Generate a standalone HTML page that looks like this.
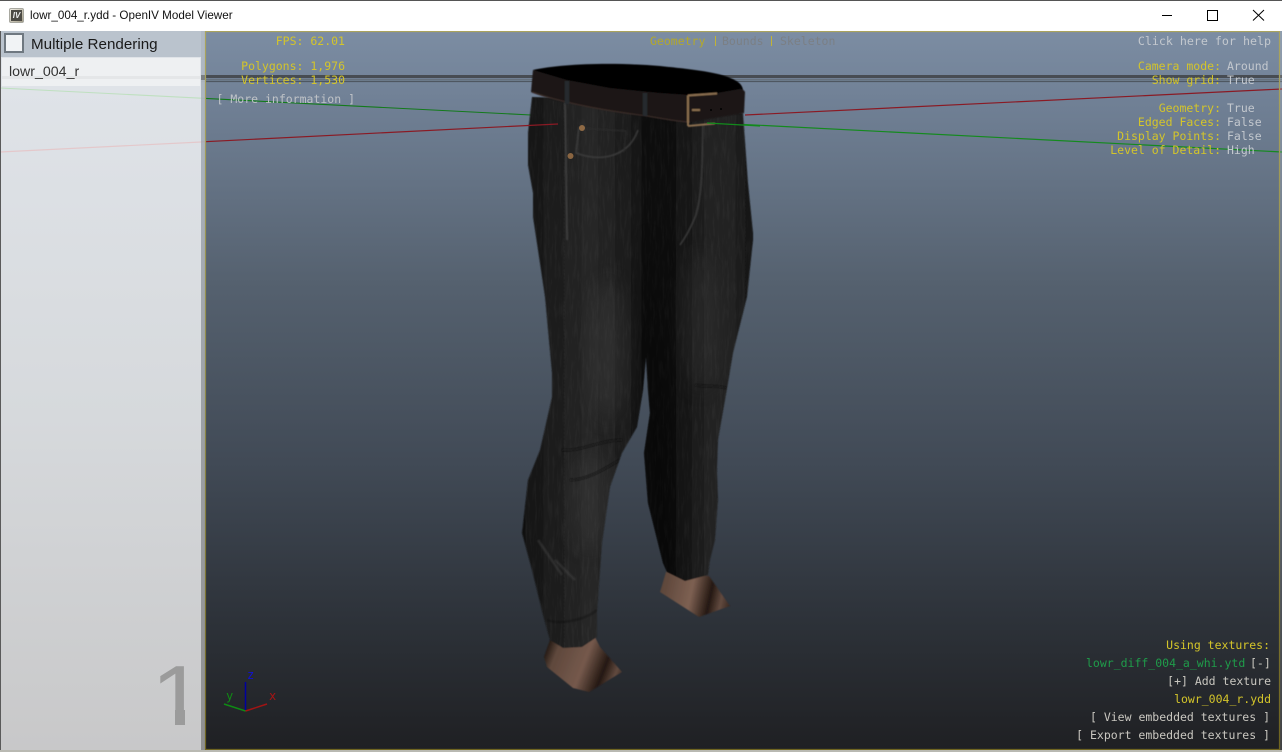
<!DOCTYPE html>
<html><head><meta charset="utf-8"><style>
html,body{margin:0;padding:0;background:#fff}
#w{position:relative;width:1282px;height:752px;overflow:hidden;background:#fff;font-family:"Liberation Sans",sans-serif}
.a{position:absolute}
.t{position:absolute;font:11.5px/14px "DejaVu Sans Mono","Liberation Mono",monospace;white-space:pre;color:#d4c52a}
.r{text-align:right}
.g{color:#c3c8ce}
.l{color:#c9c7c0}
</style></head><body><div id="w">
<div class="a" style="left:0;top:0;width:1282px;height:1px;background:#555"></div>
<div class="a" style="left:9px;top:8px;width:15px;height:15px;border-radius:2px;background:linear-gradient(135deg,#f2efe6,#a59f8b);border:1px solid #a8a8a0;box-sizing:border-box"></div>
<div class="a" style="left:11px;top:10px;width:11px;height:11px;background:#4c4a44;color:#eee;font:bold italic 8px/11px 'Liberation Sans',sans-serif;text-align:center">IV</div>
<div class="a" style="left:30px;top:8px;font-size:11.66px;line-height:16px;color:#111">lowr_004_r.ydd - OpenIV Model Viewer</div>
<svg class="a" style="left:1150px;top:0" width="132" height="30" fill="none" stroke="#000" stroke-width="1"><path d="M12 15.5h10M57.5 10.500h10v10h-10zM103 10l11 10.500M114 10l-11 10.500"/></svg>

<svg class="a" style="left:0;top:31px" width="1282" height="721" viewBox="0 31 1282 721">
<defs>
<linearGradient id="bg" x1="0" y1="31" x2="0" y2="750" gradientUnits="userSpaceOnUse">
<stop offset="0" stop-color="#7c8da3"/><stop offset=".1" stop-color="#708095"/><stop offset=".35" stop-color="#55616f"/><stop offset=".6" stop-color="#414a56"/><stop offset=".82" stop-color="#2d3239"/><stop offset="1" stop-color="#1f2023"/>
</linearGradient>
<linearGradient id="panel" x1="0" y1="86" x2="0" y2="750" gradientUnits="userSpaceOnUse">
<stop offset="0" stop-color="#dfe3e8"/><stop offset=".5" stop-color="#d6d9dc"/><stop offset="1" stop-color="#c8c8c9"/>
</linearGradient>
<linearGradient id="strip" x1="0" y1="31" x2="0" y2="750" gradientUnits="userSpaceOnUse">
<stop offset="0" stop-color="#b4bdc8"/><stop offset=".5" stop-color="#a5a9ae"/><stop offset="1" stop-color="#999"/>
</linearGradient>
<linearGradient id="yb" x1="0" y1="31" x2="0" y2="750" gradientUnits="userSpaceOnUse">
<stop offset="0" stop-color="#aaa45e"/><stop offset=".5" stop-color="#8f8a4a"/><stop offset="1" stop-color="#6f6420"/>
</linearGradient>
<linearGradient id="jL" x1="522" y1="0" x2="646" y2="0" gradientUnits="userSpaceOnUse">
<stop offset="0" stop-color="#101010"/><stop offset=".18" stop-color="#1a1a1a"/><stop offset=".55" stop-color="#272727"/><stop offset=".85" stop-color="#1c1c1c"/><stop offset="1" stop-color="#0e0e0e"/>
</linearGradient>
<linearGradient id="jR" x1="645" y1="0" x2="754" y2="0" gradientUnits="userSpaceOnUse">
<stop offset="0" stop-color="#0b0b0b"/><stop offset=".3" stop-color="#121212"/><stop offset=".6" stop-color="#232323"/><stop offset=".88" stop-color="#1f1f1f"/><stop offset="1" stop-color="#0f0f0f"/>
</linearGradient>
<linearGradient id="f1" x1="545" y1="650" x2="622" y2="680" gradientUnits="userSpaceOnUse">
<stop offset="0" stop-color="#1e1510"/><stop offset=".14" stop-color="#5f483c"/><stop offset=".5" stop-color="#75594c"/><stop offset=".75" stop-color="#241812"/><stop offset=".9" stop-color="#624a3f"/><stop offset="1" stop-color="#3a2a22"/>
</linearGradient>
<linearGradient id="f2" x1="660" y1="585" x2="730" y2="600" gradientUnits="userSpaceOnUse">
<stop offset="0" stop-color="#5a4438"/><stop offset=".45" stop-color="#7d6052"/><stop offset=".72" stop-color="#241812"/><stop offset=".88" stop-color="#624a3f"/><stop offset="1" stop-color="#3d2c24"/>
</linearGradient>
<filter id="n" x="0" y="0" width="100%" height="100%" color-interpolation-filters="sRGB"><feTurbulence type="fractalNoise" baseFrequency=".4 .05" numOctaves="3" seed="4"/><feColorMatrix values="0 0 0 0 1 0 0 0 0 1 0 0 0 0 1 1.5 0 0 0 -.62"/></filter>
<filter id="b1" x="-5%" y="-5%" width="110%" height="110%"><feGaussianBlur stdDeviation=".9"/></filter>
<filter id="b2" x="-30%" y="-30%" width="160%" height="160%"><feGaussianBlur stdDeviation="10"/></filter>
<filter id="b0" x="-5%" y="-5%" width="110%" height="110%"><feGaussianBlur stdDeviation=".45"/></filter>
<clipPath id="pc"><path d="M532 97L528 133L528 165L533 193L533 217L538 250L545 297L552 373L552 397L540 450L528 480L522 533L532 570L543 615L550 640L563 648L582 647L597 637L597 613L602 543L610 487L622 453L637 427L643 390L646 357L648 390L650 413L644 453L648 503L654 527L663 563L667 572L685 581L708 575L710 560L715 540L718 500L717 470L718 440L728 383L733 353L747 297L753 240L753 233L748 183L743 113L687 122L647 115L567 103Z"/></clipPath>
</defs>
<rect x="0" y="31" width="1282" height="721" fill="url(#bg)"/>
<!-- horizon -->
<g fill="none">
<path d="M200 76.5H1282" stroke="#474c52" stroke-width="3"/>
<path d="M200 79.5H1282" stroke="#65707c" stroke-width="1.5"/>
<path d="M200 81.5H1282" stroke="#4e5761" stroke-width="1.2"/>
<path d="M0 88L531 115" stroke="#137a1b" stroke-width="1.1"/>
<path d="M0 152L558 124" stroke="#8a1a24" stroke-width="1.2"/>
<path d="M715 123L1282 152" stroke="#148a1e" stroke-width="1.2"/>
<path d="M745 115L1282 89" stroke="#8a1a24" stroke-width="1.2"/>
</g>
<!-- feet -->
<g filter="url(#b0)">
<path d="M550 640L544 657L547 667L573 688L589 692L622 672L600 647L595 637Z" fill="url(#f1)"/>
<path d="M666 572L660 592L699 617L730 606L709 576Z" fill="url(#f2)"/>
<!-- jeans -->
<path d="M646 100L532 97L528 133L528 165L533 193L533 217L538 250L545 297L552 373L552 397L540 450L528 480L522 533L532 570L543 615L550 640L563 648L582 647L597 637L597 613L602 543L610 487L622 453L637 427L643 390L646 357L660 200Z" fill="url(#jL)"/>
<path d="M646 100L743 113L748 183L753 233L753 240L747 297L733 353L728 383L718 440L717 470L718 500L715 540L710 560L708 575L685 581L667 572L663 563L654 527L648 503L644 453L650 413L648 390L646 357L648 260Z" fill="url(#jR)"/>
</g>
<g clip-path="url(#pc)">
<rect x="520" y="90" width="236" height="560" filter="url(#n)" opacity=".055"/>
<ellipse cx="608" cy="350" rx="18" ry="70" fill="#555" opacity=".25" filter="url(#b2)"/>
<ellipse cx="700" cy="320" rx="18" ry="70" fill="#444" opacity=".25" filter="url(#b2)"/>
<ellipse cx="590" cy="500" rx="22" ry="50" fill="#555" opacity=".2" filter="url(#b2)"/>
<path d="M647 230C658 300 668 380 672 480L680 585L650 590L642 420Z" fill="#000" opacity=".38" filter="url(#b2)"/>
<g filter="url(#b1)" fill="none">
<path d="M565 100L566 160L567 240" stroke="#444" stroke-width="1.4"/>
<path d="M579 127L576 153C600 162 628 158 638 130" stroke="#404040" stroke-width="1.3"/>
<path d="M578 128L626 131L624 152" stroke="#2e2e2e" stroke-width="1"/>
<path d="M703 125C702 160 703 190 696 215C690 230 685 238 680 245" stroke="#3c3c3c" stroke-width="1.5"/>
<path d="M562 450C580 452 600 440 622 440M570 480C590 480 610 465 620 460M695 385C705 387 718 385 726 388" stroke="#0c0c0c" stroke-width="2.500" opacity=".55"/>
<path d="M538 540L562 575M555 560L575 580" stroke="#4e4e4e" stroke-width="2.500" opacity=".35"/>
<path d="M547 620C560 625 585 620 597 610" stroke="#0a0a0a" stroke-width="2.500" opacity=".25"/>
</g>
</g>
<!-- waist -->
<g filter="url(#b0)">
<path d="M533 70C560 64 610 62 660 66C690 69 715 72 728 77C738 81 742 84 743 90L717 97L660 96L610 90L567 82Z" fill="#040404"/>
<path d="M533 70L531 92C545 99 600 110 647 116C665 119 680 122 690 122L744 113L745 92C744 90 742 89 740 89L717 93L690 95L660 93L610 88L567 80Z" fill="#1b1514"/>
<path d="M532 92C560 102 600 110 647 116C665 119 680 122 690 122" stroke="#382b27" stroke-width="1.2" fill="none"/>
<path d="M567 81V104M645 93V116" stroke="#252b2e" stroke-width="4.5" fill="none"/>
<path d="M688 95.500L717 93.500M688 95.500V126M688 126L715 123.500M692 110H700" stroke="#8a6e4f" stroke-width="2" fill="none"/>
</g>
<circle cx="711" cy="110" r="1" fill="#000"/><circle cx="721" cy="109" r="1" fill="#000"/>
<circle cx="582" cy="128" r="3" fill="#8f6a45"/><circle cx="570.500" cy="156" r="3" fill="#8a6541"/>
<path d="M707 123L760 126" stroke="#128a1c" stroke-width="1.3"/>
<path d="M528 125.500L558 124" stroke="#8a1a24" stroke-width="1.2"/>
<!-- axis -->
<g fill="none" stroke-width="1.5">
<path d="M245.500 711V682" stroke="#0000a0"/>
<path d="M245.500 711L224 704" stroke="#0f8a14"/>
<path d="M245.500 711L267 704" stroke="#a01414"/>
</g>
<!-- left panel -->
<rect x="0" y="31" width="201" height="721" fill="url(#panel)"/>
<rect x="0" y="31" width="201" height="26" fill="#bac3cd"/>
<rect x="2" y="58" width="198" height="28" fill="#eef0f2"/>
<rect x="2" y="76" width="198" height="3" fill="#e4e6e8"/>
<path d="M0 88L201 98.200" stroke="#bfe0c0" stroke-width="1.100" fill="none"/>
<path d="M0 152L201 142" stroke="#e4c8cb" stroke-width="1.200" fill="none"/>
<rect x="201" y="31" width="4" height="721" fill="url(#strip)" opacity=".92"/>
<rect x="201" y="75" width="4" height="5" fill="#6d7074" opacity=".8"/>
<rect x="0" y="31" width="1" height="721" fill="#5a5a5a"/>
<!-- viewport border -->
<path d="M205.500 31.500H1279.500V749.500H205.500Z" fill="none" stroke="url(#yb)" stroke-width="1.200"/>
<rect x="1280" y="31" width="2" height="721" fill="#fff" opacity=".15"/>
<rect x="0" y="750" width="1282" height="2" fill="#b9b9b2"/>
</svg>

<div class="a" style="left:4px;top:33px;width:20px;height:20px;box-sizing:border-box;border:2px solid #6f7880;background:#f1f3f5"></div>
<div class="a" style="left:31px;top:35px;font-size:15.2px;line-height:20px;color:#1a1a1a">Multiple Rendering</div>
<div class="a" style="left:9px;top:62px;font-size:14.2px;line-height:20px;color:#333">lowr_004_r</div>
<div class="a" style="left:151px;top:644px;height:72px;overflow:hidden;font-size:88px;line-height:106px;color:#9b9b9b;transform:scaleX(1.1);transform-origin:left top">1</div>
<div class="a" style="left:175px;top:710px;width:10px;height:15px;background:#9b9b9b"></div>

<div class="t r" style="right:937px;top:34px">FPS: 62.01</div>
<div class="t r" style="right:937px;top:59px">Polygons: 1,976</div>
<div class="t r" style="right:937px;top:73px">Vertices: 1,530</div>
<div class="t r l" style="right:927px;top:92px;color:#bfc3c7">[ More information ]</div>
<div class="t" style="left:650px;top:34px;color:#b4a82a">Geometry</div>
<div class="a" style="left:715px;top:36px;width:1px;height:10px;background:#c2b335"></div>
<div class="t" style="left:722px;top:34px;color:#7b7f84">Bounds</div>
<div class="a" style="left:771px;top:36px;width:1px;height:10px;background:#c2b335"></div>
<div class="t" style="left:780px;top:34px;color:#7b7f84">Skeleton</div>
<div class="t r g" style="right:11px;top:34px;font-size:11.65px">Click here for help</div>

<div class="t r" style="right:61px;top:59px">Camera mode:</div><div class="t g" style="left:1227px;top:59px">Around</div>
<div class="t r" style="right:61px;top:73px">Show grid:</div><div class="t g" style="left:1227px;top:73px">True</div>
<div class="t r" style="right:61px;top:101px">Geometry:</div><div class="t g" style="left:1227px;top:101px">True</div>
<div class="t r" style="right:61px;top:115px">Edged Faces:</div><div class="t g" style="left:1227px;top:115px">False</div>
<div class="t r" style="right:61px;top:129px">Display Points:</div><div class="t g" style="left:1227px;top:129px">False</div>
<div class="t r" style="right:61px;top:143px">Level of Detail:</div><div class="t g" style="left:1227px;top:143px">High</div>

<div class="t r" style="right:12px;top:638px">Using textures:</div>
<div class="t" style="left:1086px;top:656px;color:#1f9c4a">lowr_diff_004_a_whi.ytd</div><div class="t l" style="left:1250px;top:656px">[-]</div>
<div class="t r l" style="right:11px;top:674px">[+] Add texture</div>
<div class="t r" style="right:11px;top:692px">lowr_004_r.ydd</div>
<div class="t r l" style="right:12px;top:710px">[ View embedded textures ]</div>
<div class="t r l" style="right:12px;top:728px">[ Export embedded textures ]</div>

<div class="a" style="left:247px;top:669px;font:12px/12px 'DejaVu Sans Mono',monospace;color:#1010d8">z</div>
<div class="a" style="left:226px;top:690px;font:12px/12px 'DejaVu Sans Mono',monospace;color:#108a14">y</div>
<div class="a" style="left:269px;top:690px;font:12px/12px 'DejaVu Sans Mono',monospace;color:#a81414">x</div>
</div></body></html>
